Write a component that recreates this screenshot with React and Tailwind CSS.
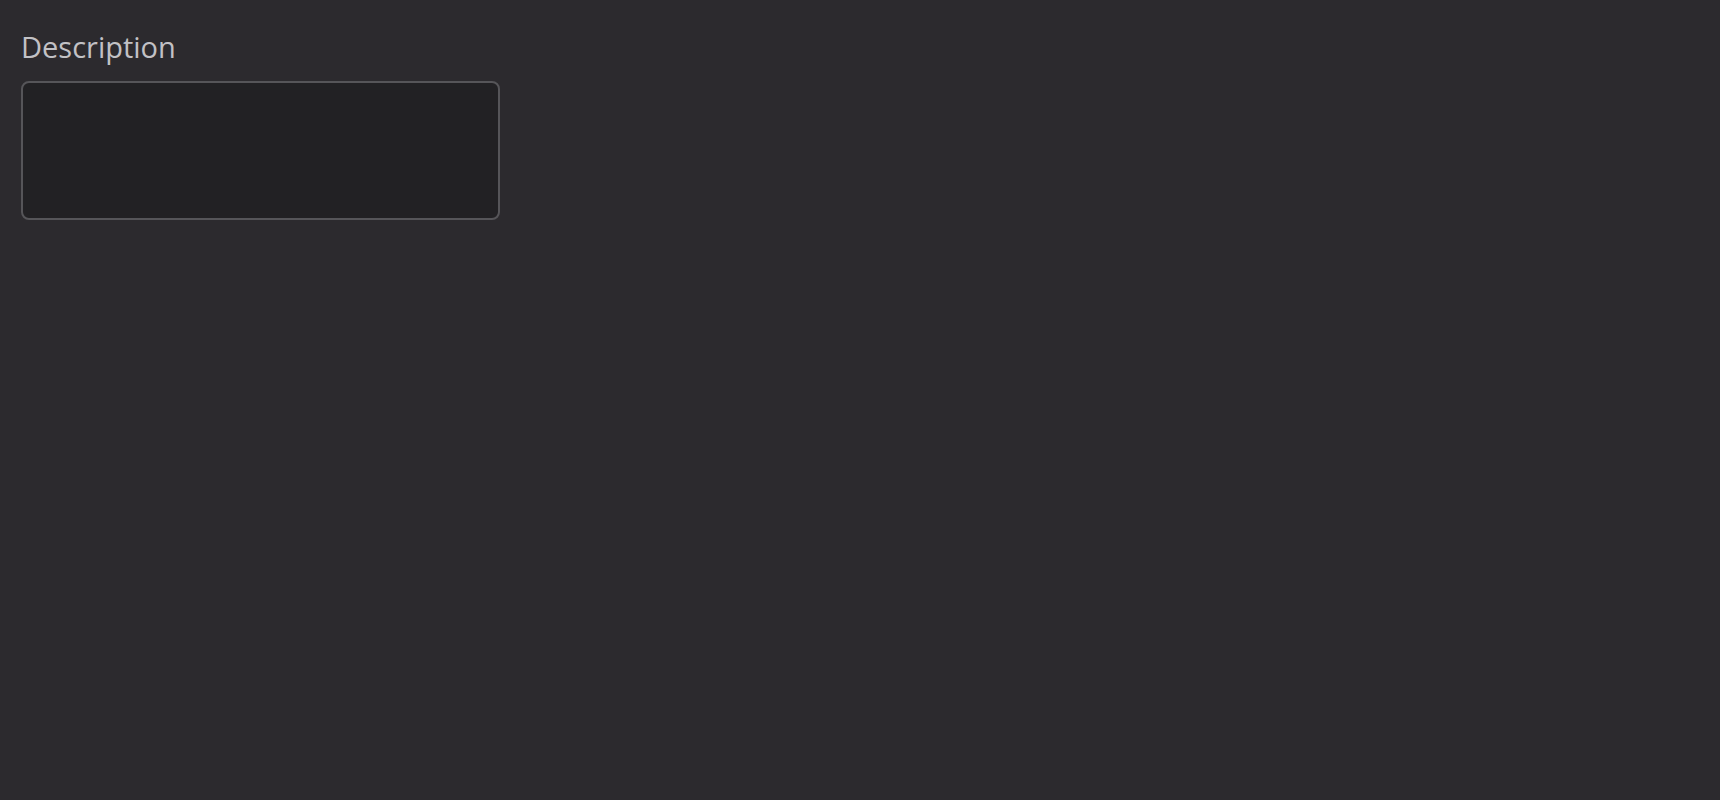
export default function App() {
  return (
    <div className="min-h-[800px] w-full bg-[#2c2a2e] pl-[21px] pt-[29px]" style={{ fontFamily: '"Open Sans", Lato, sans-serif' }}>
      <label className="block text-[29px] font-medium leading-[36px] text-[#c2c1c5]">Description</label>
      <textarea className="mt-[16px] block h-[139px] w-[479px] resize-none rounded-[8px] border-2 border-[#565559] bg-[#222124] outline-none" />
    </div>
  );
}
